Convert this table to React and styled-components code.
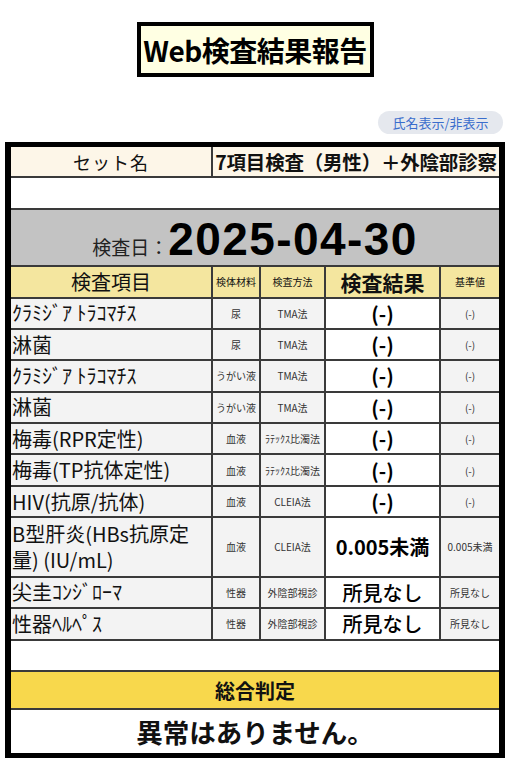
import styled, { createGlobalStyle } from "styled-components";

const GlobalStyle = createGlobalStyle`
  html, body { margin: 0; padding: 0; background: #fff; }
  body { font-family: "Noto Sans CJK JP", "Noto Sans", sans-serif; color: #111; }
`;

const items = [
  { name: "ｸﾗﾐｼﾞｱ ﾄﾗｺﾏﾁｽ", material: "尿", method: "TMA法", result: "(-)", ref: "(-)" },
  { name: "淋菌", material: "尿", method: "TMA法", result: "(-)", ref: "(-)" },
  { name: "ｸﾗﾐｼﾞｱ ﾄﾗｺﾏﾁｽ", material: "うがい液", method: "TMA法", result: "(-)", ref: "(-)" },
  { name: "淋菌", material: "うがい液", method: "TMA法", result: "(-)", ref: "(-)" },
  { name: "梅毒(RPR定性)", material: "血液", method: "ﾗﾃｯｸｽ比濁法", result: "(-)", ref: "(-)" },
  { name: "梅毒(TP抗体定性)", material: "血液", method: "ﾗﾃｯｸｽ比濁法", result: "(-)", ref: "(-)" },
  { name: "HIV(抗原/抗体)", material: "血液", method: "CLEIA法", result: "(-)", ref: "(-)" },
  { name: "B型肝炎(HBs抗原定量) (IU/mL)", material: "血液", method: "CLEIA法", result: "0.005未満", ref: "0.005未満", tall: true },
  { name: "尖圭ｺﾝｼﾞﾛｰﾏ", material: "性器", method: "外陰部視診", result: "所見なし", ref: "所見なし", soft: true },
  { name: "性器ﾍﾙﾍﾟｽ", material: "性器", method: "外陰部視診", result: "所見なし", ref: "所見なし", soft: true },
];

const App = () => {
  return (
    <Page>
      <GlobalStyle />
      <TitleWrap>
        <Title>Web検査結果報告</Title>
      </TitleWrap>
      <ToggleRow>
        <ToggleButton type="button">氏名表示/非表示</ToggleButton>
      </ToggleRow>
      <Sheet>
        <Report>
          <colgroup>
            <col style={{ width: 201 }} />
            <col style={{ width: 48 }} />
            <col style={{ width: 65 }} />
            <col style={{ width: 115 }} />
            <col style={{ width: 59 }} />
          </colgroup>
          <tbody>
            <tr>
              <SetCell>セット名</SetCell>
              <SetCell colSpan={4} $bold>7項目検査（男性）＋外陰部診察</SetCell>
            </tr>
            <tr>
              <BlankCell colSpan={5} />
            </tr>
            <tr>
              <DateCell colSpan={5}>
                <DateLine>
                  <DateLabel>検査日：</DateLabel>
                  <DateValue>2025-04-30</DateValue>
                </DateLine>
              </DateCell>
            </tr>
            <tr>
              <HeadCell $size="20px">検査項目</HeadCell>
              <HeadCell $size="10px">検体材料</HeadCell>
              <HeadCell $size="10px">検査方法</HeadCell>
              <HeadCell $size="21px" $bold>検査結果</HeadCell>
              <HeadCell $size="10px">基準値</HeadCell>
            </tr>
            {items.map((it, i) => (
              <DataRow key={i} $tall={it.tall}>
                <ItemCell>{it.name}</ItemCell>
                <SmallCell>{it.material}</SmallCell>
                <SmallCell>{it.method}</SmallCell>
                <ResultCell $soft={it.soft}>{it.result}</ResultCell>
                <SmallCell>{it.ref}</SmallCell>
              </DataRow>
            ))}
            <tr>
              <BlankCell colSpan={5} />
            </tr>
            <tr>
              <JudgeHead colSpan={5}>総合判定</JudgeHead>
            </tr>
            <tr>
              <JudgeBody colSpan={5}>異常はありません。</JudgeBody>
            </tr>
          </tbody>
        </Report>
      </Sheet>
    </Page>
  );
};

const Page = styled.div`
  width: 510px;
  padding: 22px 5px 8px;
  box-sizing: border-box;
`;

const TitleWrap = styled.div`
  display: flex;
  justify-content: center;
`;

const Title = styled.h1`
  margin: 0;
  width: 237px;
  height: 55px;
  box-sizing: border-box;
  border: 4px solid #000;
  background: #ffffe3;
  display: flex;
  align-items: center;
  justify-content: center;
  font-size: 28px;
  font-weight: 700;
  letter-spacing: -0.5px;
  color: #000;
`;

const ToggleRow = styled.div`
  display: flex;
  justify-content: flex-end;
  margin-top: 34px;
  padding-right: 2px;
`;

const ToggleButton = styled.button`
  width: 125px;
  height: 23px;
  border: none;
  border-radius: 12px;
  background: #e5e8ee;
  color: #3a6dcc;
  font-family: "Noto Sans CJK JP", sans-serif;
  font-size: 13px;
  padding: 0;
  line-height: 23px;
`;

const Sheet = styled.div`
  margin-top: 8px;
  border: 6px solid #000;
  border-top-width: 5px;
  border-bottom-width: 5px;
`;

const Report = styled.table`
  width: 488px;
  border-collapse: collapse;
  table-layout: fixed;
  td { border: 2px solid #3a3a3a; padding: 0; }
  tr:first-child td { border-top: none; }
  tr:last-child td { border-bottom: none; }
  td:first-child { border-left: none; }
  td:last-child { border-right: none; }
`;

const SetCell = styled.td`
  height: 28px;
  background: #fdf6e8;
  text-align: center;
  font-size: ${(p) => (p.$bold ? "19.5px" : "18px")};
  font-weight: ${(p) => (p.$bold ? 700 : 400)};
  white-space: nowrap;
  overflow: hidden;
  letter-spacing: ${(p) => (p.$bold ? "-0.2px" : "1px")};
`;

const BlankCell = styled.td`
  height: 29.5px;
  background: #fff;
`;

const DateCell = styled.td`
  height: 55px;
  background: #c3c3c3;
  vertical-align: bottom;
`;

const DateLine = styled.div`
  height: 55px;
  display: flex;
  justify-content: center;
  align-items: flex-end;
  padding-bottom: 3px;
  box-sizing: border-box;
  line-height: 1;
`;

const DateLabel = styled.span`
  font-size: 19px;
  color: #222;
  margin-bottom: 6px;
`;

const DateValue = styled.span`
  font-family: "Liberation Sans", Arial, sans-serif;
  font-size: 46px;
  font-weight: 700;
  letter-spacing: 1.4px;
  color: #000;
`;

const HeadCell = styled.td`
  height: 29px;
  background: #f4e69f;
  text-align: center;
  font-size: ${(p) => p.$size};
  font-weight: ${(p) => (p.$bold ? 700 : 400)};
  white-space: nowrap;
`;

const DataRow = styled.tr`
  td { height: ${(p) => (p.$tall ? "57.5px" : "29.4px")}; }
`;

const ItemCell = styled.td`
  background: #f3f3f3;
  font-size: 20px;
  line-height: 26px;
  padding-left: 1px !important;
  color: #111;
`;

const SmallCell = styled.td`
  background: #f3f3f3;
  text-align: center;
  font-size: 10px;
  white-space: nowrap;
  color: #333;
`;

const ResultCell = styled.td`
  background: #fff;
  text-align: center;
  font-size: 20px;
  font-weight: ${(p) => (p.$soft ? 500 : 700)};
  color: #000;
`;

const JudgeHead = styled.td`
  height: 36px;
  background: #f8d84c;
  text-align: center;
  font-size: 20px;
  font-weight: 700;
`;

const JudgeBody = styled.td`
  height: 43px;
  background: #fff;
  text-align: center;
  font-size: 26.5px;
  font-weight: 700;
  color: #111;
`;

export default App;
